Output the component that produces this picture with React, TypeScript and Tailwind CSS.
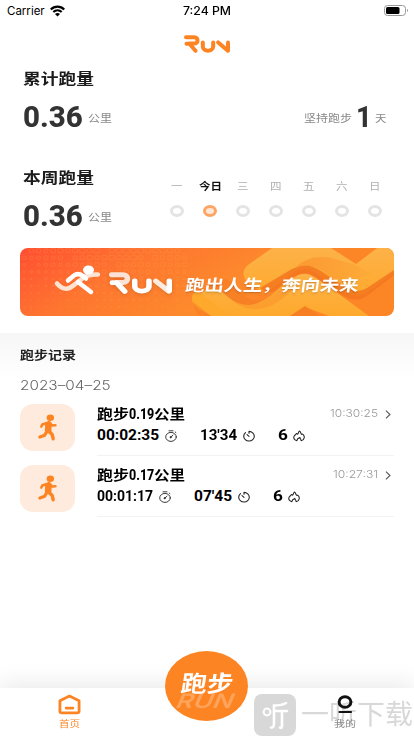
import { useLayoutEffect, useRef, useState, type ReactNode } from "react";

const SANS = "font-['Inter','Noto_Sans_CJK_SC',sans-serif]";
const DIN = "font-['Roboto','Noto_Sans_CJK_SC',sans-serif]";

/** One line of text, fitted horizontally to a given width. */
function Fit({ w, className = "", children }: { w: number; className?: string; children: ReactNode }) {
  const ref = useRef<HTMLSpanElement>(null);
  const [k, setK] = useState(1);
  useLayoutEffect(() => {
    if (ref.current) setK(w / ref.current.offsetWidth);
  }, [w, children]);
  return (
    <div className={`shrink-0 whitespace-nowrap ${className}`} style={{ width: w }}>
      <span ref={ref} className="inline-block origin-left" style={{ transform: `scaleX(${k})` }}>
        {children}
      </span>
    </div>
  );
}

function RunLogo({ className, soft }: { className: string; soft?: boolean }) {
  return (
    <svg viewBox="0 0 46 18" preserveAspectRatio="none" className={className} fill="none" stroke="currentColor" strokeWidth="4" strokeLinecap="round" strokeLinejoin="round">
      <path d="M2 2.2H10.2C14.6 2.2 14.6 8.6 10.2 8.6H6" opacity={soft ? 0.8 : 1} />
      <path d="M2.5 8.7H5.5L11.5 15.8" />
      <path d="M18.8 7.4V11.5C18.8 17 29.2 17 29.2 11.5V7.4" />
      <path d="M34.2 7.4L43.6 15.6" opacity={soft ? 0.85 : 1} />
      <path d="M44 7.4V15.4" />
    </svg>
  );
}

function Stopwatch() {
  return (
    <svg viewBox="0 0 12 12" className="h-3 w-3 shrink-0" fill="none" stroke="#333" strokeWidth="0.95" strokeLinecap="round">
      <ellipse cx="6" cy="6.9" rx="5.3" ry="4.500" />
      <path d="M4 0.8H8M5.6 7.2L8 5.2M10.200 2L10.900 2.6" />
      <circle cx="5.6" cy="7.2" r="0.6" fill="#333" />
    </svg>
  );
}

function Pace() {
  return (
    <svg viewBox="0 0 12 12" className="h-3 w-3 shrink-0" fill="none" stroke="#222" strokeWidth="1.100" strokeLinecap="round">
      <path d="M6 1.4V3.3M6 1.4C8.9 1.4 11.3 3.5 11.3 6.2C11.3 8.9 8.9 11 6 11C3.100 11 0.700 8.900 0.700 6.200C0.700 4.700 1.400 3.500 2.500 2.600M4 4.600L6 6.300" />
    </svg>
  );
}

function Flame() {
  return (
    <svg viewBox="0 0 12 12" className="h-3 w-3 shrink-0" fill="none" stroke="#222" strokeWidth="1.050" strokeLinejoin="round" strokeLinecap="round">
      <path d="M3.900 10.700C1.700 10.200 0.600 8.600 0.800 7C1 5.200 2.900 5 3.300 3.600C4.100 3.300 4.200 4.200 4.500 4.200C5.600 3.700 5.300 2 6.300 1.100C7.800 1.500 7.700 3.400 8.400 4.200C9 4.700 9.500 4.200 9.700 4.100C10.800 5 11.500 6.400 11.200 7.900C10.900 9.500 9.700 10.500 8.100 10.700C8.400 9.300 6.900 8.900 6.800 7.400C5.400 8 3.700 8.800 3.900 10.700Z" />
    </svg>
  );
}

function Runner() {
  return (
    <svg viewBox="0 0 20 28" preserveAspectRatio="none" className="h-[27px] w-[19px]" fill="none" stroke="#fd8422" strokeLinecap="round" strokeLinejoin="round">
      <ellipse cx="13" cy="3.800" rx="3.900" ry="3.400" fill="#fd8422" stroke="none" />
      <path d="M11.300 8.200L13.200 10.500L12.800 18.500L8.500 18L8.800 10Z" fill="#fd8422" strokeWidth="2.500" />
      <path d="M9.500 9.300L4.500 11L3.500 13" strokeWidth="2.700" />
      <path d="M12 8.800L15 12L18.300 11.700" strokeWidth="2.700" />
      <path d="M9.500 18L7 22L2 23.800" strokeWidth="3.400" />
      <path d="M11.300 18L14.800 21L16 25.700" strokeWidth="3.600" />
    </svg>
  );
}

function BannerArt() {
  const dots = [];
  for (let r = 0; r < 9; r++)
    for (let c = 0; c < 23; c++) {
      const s = Math.max(0.8, 5.4 - r * 0.55 - Math.abs(c - 14) * 0.12 + ((c * 7 + r * 5) % 3) * 0.35);
      if ((c * 5 + r * 3) % 11 !== 0)
        dots.push(<rect key={`${r}-${c}`} x={4 + c * 7.3 - s / 2} y={3 + r * 7 - s / 2} width={s} height={s * 0.85} rx="1" />);
    }
  return (
    <svg viewBox="0 0 374 68" preserveAspectRatio="none" className="absolute inset-0 h-full w-full">
      <defs>
        <linearGradient id="bg" gradientUnits="userSpaceOnUse" x1="0" y1="0" x2="90" y2="150">
          <stop offset="0" stopColor="#ff4e32" />
          <stop offset="0.4" stopColor="#fe7530" />
          <stop offset="0.8" stopColor="#fd8a2c" />
          <stop offset="1" stopColor="#fc8526" />
        </linearGradient>
        <linearGradient id="band" x1="0" y1="0" x2="0" y2="1">
          <stop offset="0" stopColor="#fdb248" />
          <stop offset="1" stopColor="#fea92d" />
        </linearGradient>
        <linearGradient id="fold" x1="0" y1="0" x2="1" y2="0.200">
          <stop offset="0" stopColor="#f98325" />
          <stop offset="1" stopColor="#fca536" />
        </linearGradient>
      </defs>
      <rect width="374" height="68" fill="url(#bg)" />
      <g fill="none" stroke="#ffb050" strokeWidth="0.700" opacity="0.330">{dots}</g>
      <path d="M173 46C176 42 181 44 188 49L216 68H191L177 60C172 56 171 50 173 46Z" fill="#fea82c" />
      <path d="M173 54L191 68H180Q174 62 173 54Z" fill="#f57a22" opacity="0.500" />
      <path d="M180 45L196 33C204 28 210 32 217 40L225 48C232 54 240 54 249 48L275 29L284 36L262 52C246 64 228 64 212 52L204 60Z" fill="#f57d24" opacity="0.750" />
      <path d="M180 45L190 41Q200 41 208 49Q224 62 240 54Q250 49 262 38L276 28Q285 22 294 28L349 68H309L285 59L272 68H212Z" fill="url(#band)" />
      <path d="M208 48Q224 62 240 54Q252 48 264 38L274 40Q250 66 226 60Q214 56 208 48Z" fill="#f58825" opacity="0.350" />
      <path d="M270 68L285 58L300 68Z" fill="#f57f22" />
      <path d="M225 31Q221 23 228 17L252 0H311L336 16L357 0H374V25L348 44Q337 51 324 44L296 25Q285 17 273 25L250 42Q237 46 225 31Z" fill="url(#band)" />
      <path d="M240 40L272 21Q287 13 301 23L327 40Q337 46 347 40L374 22V27L348 47Q336 56 322 47L296 30Q285 22 274 29L254 43Q246 46 240 40Z" fill="#f37620" opacity="0.850" />
      <path d="M276 19Q290 6 311 10L333 16L352 26Q336 28 326 39L303 23Q290 15 276 19Z" fill="url(#fold)" opacity="0.500" />
      <g strokeLinecap="round" strokeLinejoin="round" fill="none">
        <path d="M37 35.500Q45 45 54 37L63 30Q69 26 78 26.500" stroke="#ffe3d2" strokeWidth="4.500" />
        <path d="M48 32.500L54 27.500Q58 24.500 63 28L66 30.500" stroke="#fff" strokeWidth="4.500" />
        <path d="M58 34L71 44" stroke="#fff" strokeWidth="4.500" />
        <ellipse cx="68.500" cy="22" rx="5.500" ry="4.500" fill="#fff" />
      </g>
    </svg>
  );
}

const days = ["一", "今日", "三", "四", "五", "六", "日"];
const runs = [
  { km: "0.19", kw: 25, t: "00:02:35", tw: 62, p: "13'34", pw: 37, at: "10:30:25", aw: 48 },
  { km: "0.17", kw: 25, t: "00:01:17", tw: 56, p: "07'45", pw: 38, at: "10:27:31", aw: 45 },
];

function Distance() {
  return (
    <div className="flex">
      <Fit w={60} className={`h-8 text-[29px] leading-8 font-extrabold text-[#333] ${DIN}`}>0.36</Fit>
      <Fit w={24} className="ml-[5px] pt-[10px] text-[10.500px] leading-4 text-[#888]">公里</Fit>
    </div>
  );
}

export default function App() {
  return (
    <div className={`relative flex h-[736px] w-[414px] flex-col overflow-hidden bg-white text-black ${SANS}`}>
      <div className="grid h-[22px] shrink-0 grid-cols-3 items-center px-[7px]">
        <div className="flex items-center gap-[5px]">
          <Fit w={38} className="text-[11.500px] leading-4">Carrier</Fit>
          <svg viewBox="0 0 15 12" className="h-3 w-[15px]" fill="none" stroke="#000" strokeWidth="2.200">
            <path d="M0.800 4.400C4.500 0.600 10.500 0.600 14.200 4.400M3.300 7C5.700 4.700 9.300 4.700 11.700 7" />
            <path d="M7.500 11.500L5 9C6.400 7.700 8.600 7.700 10 9Z" fill="#000" stroke="none" />
          </svg>
        </div>
        <Fit w={48} className="justify-self-center text-[11.500px] leading-4 font-medium">7:24 PM</Fit>
        <svg viewBox="0 0 25 11" className="mt-[-2px] mr-[-2px] h-[11px] w-[25px] justify-self-end">
          <rect x="0.500" y="0.500" width="21" height="10" rx="3" fill="none" stroke="#999" />
          <rect x="2" y="2" width="13.500" height="7" rx="1.500" />
          <path d="M23 3.800Q25 5.500 23 7.200Z" fill="#999" />
        </svg>
      </div>

      <div className="flex h-[45px] shrink-0 justify-center pt-[13px]">
        <RunLogo className="h-[18px] w-[46px] text-[#fd8422]" />
      </div>

      <section className="h-[99px] shrink-0 pr-[27px] pl-[22.500px]">
        <Fit w={71} className="h-6 text-[15px] leading-6 font-bold text-[#1c1c1c]">累计跑量</Fit>
        <div className="mt-[10px] flex justify-between">
          <Distance />
          <div className="flex">
            <Fit w={48} className="pt-[10px] text-[10.500px] leading-4 text-[#888]">坚持跑步</Fit>
            <Fit w={16} className={`ml-[4px] h-8 text-[29px] leading-8 font-extrabold text-[#333] ${DIN}`}>1</Fit>
            <Fit w={12} className="ml-[3px] pt-[10px] text-[10.500px] leading-4 text-[#888]">天</Fit>
          </div>
        </div>
      </section>

      <section className="flex h-[82px] shrink-0 justify-between pr-[22.500px] pl-[22.500px]">
        <div>
          <Fit w={71} className="h-6 text-[15px] leading-6 font-bold text-[#1c1c1c]">本周跑量</Fit>
          <div className="mt-[10px]">
            <Distance />
          </div>
        </div>
        <div className="flex pt-[12px]">
          {days.map((d, i) => (
            <div key={d} className="flex w-[33px] flex-col items-center">
              <Fit w={i === 1 ? 23 : 11.5} className={`text-[10px] leading-4 ${i === 1 ? "font-bold text-[#111]" : "text-[#b0b0b0]"}`}>
                {d}
              </Fit>
              <div className={`mt-[10.500px] h-3 w-[14px] rounded-[50%] border-3 ${i === 1 ? "border-[#fda565] bg-[#ffe8d8]" : "border-[#e4e4e4]"}`} />
            </div>
          ))}
        </div>
      </section>

      <div className="relative mx-5 h-[68px] shrink-0 overflow-hidden rounded-lg">
        <BannerArt />
        <div className="relative flex h-full items-center pl-[89px]">
          <RunLogo soft className="mt-[2px] h-[22px] w-[63px] text-white drop-shadow-sm" />
          <div className="ml-[14px] flex -skew-x-8 pt-[6px] text-[16px] leading-6 font-bold text-white text-shadow-sm">
            <Fit w={77}>跑出人生</Fit>
            <Fit w={19}>，</Fit>
            <Fit w={77}>奔向未来</Fit>
          </div>
        </div>
      </div>

      <section className="mt-[17px] h-[355px] shrink-0 bg-[linear-gradient(to_bottom,#f6f6f6,#ffffff_45px)] pr-5 pl-5">
        <Fit w={56} className="pt-[13px] text-[12px] leading-5 font-bold text-[#222]">跑步记录</Fit>
        <Fit w={91} className="pt-[9px] text-[13px] leading-5 font-light text-[#666]">2023–04–25</Fit>
        <div className="mt-[7px]">
          {runs.map((r) => (
            <div key={r.km} className="flex h-[61px] pt-[2px]">
              <div className="flex h-[47px] w-[55px] shrink-0 items-center justify-center rounded-[13px] bg-[#ffebdd]">
                <Runner />
              </div>
              <div className="ml-[22px] h-[52px] flex-1 border-b border-[#f2f2f2]">
                <div className="flex h-5 items-center">
                  <div className={`flex text-[14px] leading-5 font-bold ${DIN}`}>
                    <Fit w={32}>跑步</Fit>
                    <Fit w={r.kw} className="font-extrabold">{r.km}</Fit>
                    <Fit w={31}>公里</Fit>
                  </div>
                  <Fit w={r.aw} className="ml-auto text-[10.500px] leading-4 font-light text-[#999]">{r.at}</Fit>
                  <svg viewBox="0 0 6 10" className="mr-[3px] ml-[7px] h-[9px] w-[6px]" fill="none" stroke="#555" strokeWidth="1.200">
                    <path d="M0.700 0.700L5.200 5L0.700 9.300" />
                  </svg>
                </div>
                <div className={`flex h-[22px] items-center text-[15.500px] leading-5 font-bold ${DIN}`}>
                  <Fit w={r.tw}>{r.t}</Fit>
                  <div className="mr-[23px] ml-[6px] pt-px"><Stopwatch /></div>
                  <Fit w={r.pw}>{r.p}</Fit>
                  <div className="mr-[23px] ml-[6px] pt-px"><Pace /></div>
                  <Fit w={10}>6</Fit>
                  <div className="ml-[5px] pt-px"><Flame /></div>
                </div>
              </div>
            </div>
          ))}
        </div>
      </section>

      <nav className="relative flex h-12 shrink-0 justify-between bg-white px-[58px] shadow-[0_-4px_24px_rgba(0,0,0,0.09)]">
        <div className="flex flex-col items-center pt-[6px]">
          <svg viewBox="0 0 24 21" className="h-[21px] w-[23px]" fill="none" stroke="#fd8422" strokeWidth="2.900" strokeLinejoin="round" strokeLinecap="round">
            <path d="M2 6.500L12 1.700L22 6.500V17.500Q22 19.200 20 19.200H4Q2 19.200 2 17.500Z" />
            <path d="M8.500 14.200H15.500" />
          </svg>
          <Fit w={21} className="mt-[1px] text-[9px] leading-4 text-[#fd8422]">首页</Fit>
        </div>

        <div className="absolute top-1.5 left-[254px] flex h-[42px] items-center text-[#d8d8d8]">
          <svg viewBox="0 0 42 42" className="h-[42px] w-[42px]" fill="none" stroke="#fff" strokeWidth="2.600" strokeLinecap="round">
            <rect width="42" height="42" rx="8" fill="#d8d8d8" stroke="none" />
            <circle cx="13" cy="18" r="3.400" strokeWidth="2" />
            <path d="M32 9Q28 11.500 20 11.500V29Q20 34 17 33.500M20 17H33M28 17V32Q28 34.500 26 33.500" />
          </svg>
          <Fit w={112} className="ml-[5px] text-[27px] leading-9">一听下载</Fit>
        </div>

        <div className="relative mr-[0.500px] flex flex-col items-center pt-[7px]">
          <svg viewBox="0 0 16 19" className="h-[19px] w-4" fill="none" stroke="#111" strokeWidth="3">
            <ellipse cx="8" cy="7" rx="5.900" ry="5.300" />
            <path d="M2.500 17H14" strokeWidth="2.200" strokeLinecap="round" />
          </svg>
          <Fit w={22} className="mt-[2px] text-[9px] leading-4 text-[#888]">我的</Fit>
        </div>

        <div className="absolute top-[-37px] left-[165px] h-[70px] w-[83px] overflow-hidden rounded-[50%] bg-[#fd8422]">
          <Fit w={57} className="absolute top-[38px] left-[12px] -skew-x-12 text-[20px] leading-6 font-semibold text-[#fea35a] italic">RUN</Fit>
          <Fit w={52} className="absolute top-[19px] left-[16px] -skew-x-8 text-[23px] leading-7 font-bold text-white">跑步</Fit>
        </div>
      </nav>
    </div>
  );
}
